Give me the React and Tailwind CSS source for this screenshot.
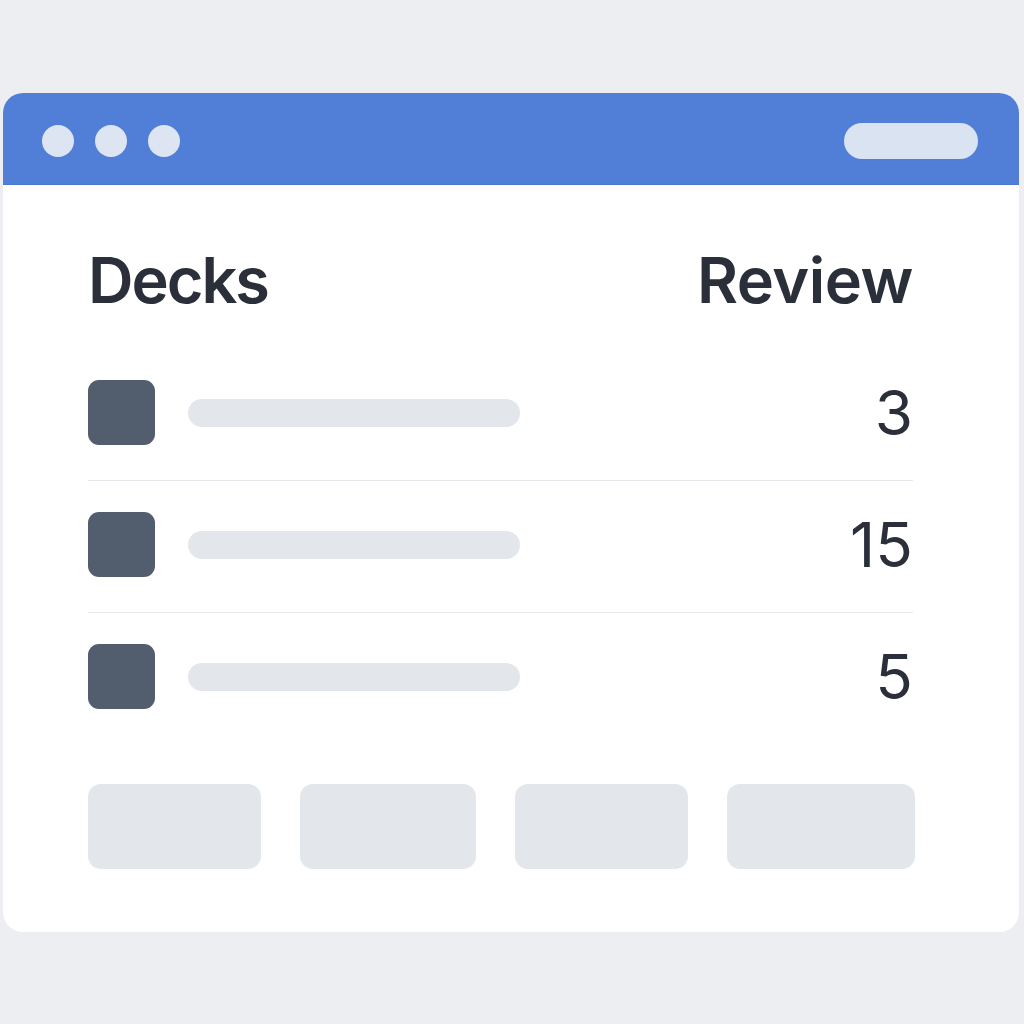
const decks = [
  { id: 1, due: 3 },
  { id: 2, due: 15 },
  { id: 3, due: 5 },
]

// bottom action tiles, widths differ slightly
const tiles = ['w-[173px]', 'w-[176px]', 'w-[173px]', 'w-[188px]']

function DeckRow({ due, last }) {
  return (
    <div className={`flex items-center pt-[31px] pb-[35px] ${last ? '' : 'border-b border-[#e3e6eb]'}`}>
      <div className="w-[67px] h-[65px] rounded-[11px] bg-[#525e6d]" />
      <div className="ml-[33px] w-[332px] h-[28px] rounded-full bg-[#e3e6eb]" />
      <span className="ml-auto text-[62px] leading-none font-normal text-[#2a2f3a]">{due}</span>
    </div>
  )
}

export default function App() {
  return (
    <div className="min-h-screen w-full bg-[#eceef1] pt-[93px] font-['Inter',sans-serif]">
      <div className="ml-[3px] w-[1016px] rounded-[20px] bg-white overflow-hidden">
        <div className="flex items-center h-[92px] pt-[4px] pl-[39px] pr-[41px] bg-[#517fd8] border-b border-[#4a77cf]">
          <div className="flex gap-[21px]">
            <span className="w-[32px] h-[32px] rounded-full bg-[#dde5f3]" />
            <span className="w-[32px] h-[32px] rounded-full bg-[#dde5f3]" />
            <span className="w-[32px] h-[32px] rounded-full bg-[#dde5f3]" />
          </div>
          <div className="ml-auto w-[134px] h-[36px] rounded-full bg-[#dae3f1]" />
        </div>

        <div className="pl-[85px] pr-[106px] pt-[64px] pb-[63px]">
          <div className="flex justify-between text-[63px] leading-none font-semibold text-[#2a2f3a]">
            <h1 className="tracking-[-2px]">Decks</h1>
            <h2 className="tracking-[-0.5px]">Review</h2>
          </div>

          <div className="mt-[37px]">
            {decks.map((d, i) => (
              <DeckRow key={d.id} due={d.due} last={i === decks.length - 1} />
            ))}
          </div>

          <div className="flex justify-between mt-[40px] -mr-[2px]">
            {tiles.map((w, i) => (
              <div key={i} className={`${w} h-[85px] rounded-[13px] bg-[#e3e6eb]`} />
            ))}
          </div>
        </div>
      </div>
    </div>
  )
}
